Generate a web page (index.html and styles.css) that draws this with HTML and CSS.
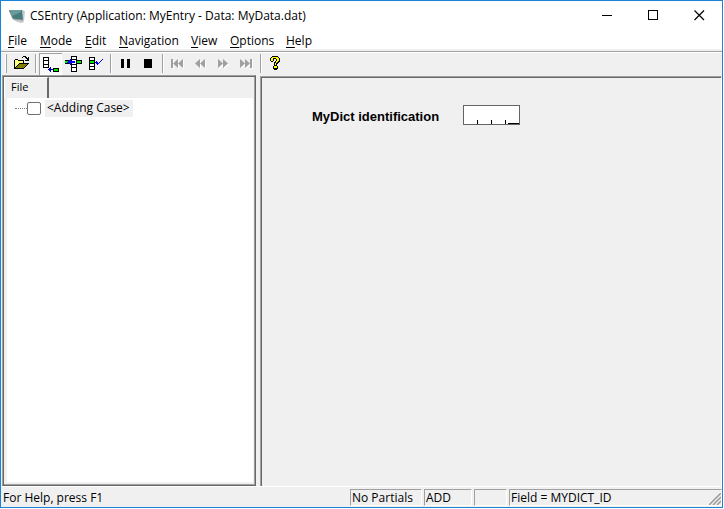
FILE: index.html
```
<!DOCTYPE html>
<html lang="en">
<head>
<meta charset="utf-8">
<title>CSEntry (Application: MyEntry - Data: MyData.dat)</title>
<link rel="stylesheet" href="styles.css">
</head>
<body>
<div class="window">
  <header class="titlebar">
    <svg class="app-icon" width="18" height="16" viewBox="0 0 18 16">
      <path d="M5 12l9 0 1 2-3 1-6-2z" fill="#c4c8c8"/>
      <path d="M13 2l3 1-1 10-2-1z" fill="#c4cbcb"/>
      <path d="M0 2l13 0 1 10-10-1z" fill="#477c7c"/>
      <path d="M1 2l11 0 0 2-9 4z" fill="#6b9c9b"/>
      <path d="M0 2l4 9 10 1" fill="none" stroke="#8a9696" stroke-width="1"/>
    </svg>
    <span class="title">CSEntry (Application: MyEntry - Data: MyData.dat)</span>
    <button class="caption" aria-label="Minimize"><svg width="11" height="11" shape-rendering="crispEdges"><path d="M0 5h10v1H0z"/></svg></button>
    <button class="caption" aria-label="Maximize"><svg width="11" height="11" shape-rendering="crispEdges"><path d="M.5 .5h9v9h-9z" fill="none" stroke="#000"/></svg></button>
    <button class="caption" aria-label="Close"><svg width="11" height="11"><path d="M.5 .5l9.500 9.500M10 .5L.5 10" stroke="#000" stroke-width="1.200"/></svg></button>
  </header>
  <nav class="menubar">
    <button><u>F</u>ile</button>
    <button><u>M</u>ode</button>
    <button><u>E</u>dit</button>
    <button><u>N</u>avigation</button>
    <button><u>V</u>iew</button>
    <button><u>O</u>ptions</button>
    <button><u>H</u>elp</button>
  </nav>
  <div class="toolbar">
    <span class="grip"></span>
    <button class="tool" aria-label="Open"><svg viewBox="0 0 23 22" shape-rendering="crispEdges">
      <path d="M4 7h1V6h3v1h6v3h5v1h-1v1h-1v1h-1v1h-1v1h-1v1H4z" fill="#000"/>
      <path d="M5 7h3v1h5v2H9v1H8v1H7v1H6v1H5z" fill="#ffff80"/>
      <path d="M9 11h8v1h-1v1h-1v1h-1v1H6v-1h1v-1h1v-1h1z" fill="#808000"/>
      <path d="M12 4h1V3h3v1h1v1h1V4h1v4h-4V7h2V6h-1V5h-1V4h-2v1h-1z" fill="#000"/>
    </svg></button>
    <span class="sep"></span>
    <button class="tool pressed" aria-label="Add case"><svg viewBox="0 0 23 22" shape-rendering="crispEdges">
      <path d="M4 4h6v11H4z"/><path d="M5 5h4v2H5zM5 8h4v3H5zM5 12h4v2H5z" fill="#fff"/>
      <path d="M9 16h1v-1h1v-1h1v2h2v1h-2v2h-1v-1h-1v-1H9z" fill="#0000c0"/>
      <path d="M14 15h6v4h-6z"/><path d="M15 16h4v2h-4z" fill="#00e800"/>
    </svg></button>
    <button class="tool" aria-label="Insert case"><svg viewBox="0 0 23 22" shape-rendering="crispEdges">
      <path d="M9 3h6v16H9z"/><path d="M10 4h4v2h-4zM10 7h4v4h-4zM10 12h4v2h-4zM10 15h4v3h-4z" fill="#fff"/>
      <path d="M3 7h5v4H3zM14 7h6v4h-6z"/><path d="M3 8h3v2H3zM15 8h4v2h-4z" fill="#00e800"/>
      <path d="M5 9h1V8h1V7h1V6h1v2h4v2H9v2H8v-1H7v-1H5z" fill="#0000ff"/>
    </svg></button>
    <button class="tool" aria-label="Modify case"><svg viewBox="0 0 23 22" shape-rendering="crispEdges">
      <path d="M4 4h6v13H4z"/><path d="M5 5h4v2H5zM5 11h4v2H5zM5 14h4v2H5z" fill="#fff"/><path d="M5 8h4v2H5z" fill="#00e800"/>
      <path d="M11 8h1v1h1v1h1V9h1V8h1V7h1V6h1v1h-1v1h-1v1h-1v1h-1v1h-1v1h-1v-1h-1v-1h-1z" fill="#0000ff"/>
    </svg></button>
    <span class="sep"></span>
    <button class="tool" aria-label="Pause"><svg viewBox="0 0 23 22" shape-rendering="crispEdges"><path d="M7 6h3v9H7zM13 6h3v9h-3z"/></svg></button>
    <button class="tool" aria-label="Stop"><svg viewBox="0 0 23 22" shape-rendering="crispEdges"><path d="M7 6h8v9H7z"/></svg></button>
    <span class="sep"></span>
    <button class="tool off" aria-label="First case" disabled><svg viewBox="0 0 23 22"><path class="lit" d="M6 7h2v9H6zM13 7v9l-5-4.500zM18 7v9l-5-4.500z"/><path d="M5 6h2v9H5zM12 6v9l-5-4.500zM17 6v9l-5-4.500z"/></svg></button>
    <button class="tool off" aria-label="Previous case" disabled><svg viewBox="0 0 23 22"><path class="lit" d="M12 7v9l-5-4.500zM17 7v9l-5-4.500z"/><path d="M11 6v9l-5-4.500zM16 6v9l-5-4.500z"/></svg></button>
    <button class="tool off" aria-label="Next case" disabled><svg viewBox="0 0 23 22"><path class="lit" d="M7 7v9l5-4.500zM12 7v9l5-4.500z"/><path d="M6 6v9l5-4.500zM11 6v9l5-4.500z"/></svg></button>
    <button class="tool off" aria-label="Last case" disabled><svg viewBox="0 0 23 22"><path class="lit" d="M6 7v9l5-4.500zM11 7v9l5-4.500zM16 7h2v9h-2z"/><path d="M5 6v9l5-4.500zM10 6v9l5-4.500zM15 6h2v9h-2z"/></svg></button>
    <span class="sep"></span>
    <button class="tool" aria-label="Help"><svg viewBox="0 0 23 22" shape-rendering="crispEdges">
      <path d="M8 3h6v1h1v1h1v4h-1v1h-1v1h-1v2h1v3h-1v1h-3v-1H9v-3h1V9h1V8h1V6h-2v2H9v1H7V8H6V5h1V4h1z"/>
      <path d="M8 4h6v1h1v3h-1v1h-1v1h-1v2h-1v-2h1V8h1V6h-1V5H9v3H7V5h1zM10 13h3v2h-3z" fill="#ff0"/>
    </svg></button>
  </div>
  <main class="work">
    <section class="cases">
      <div class="tabs"><button class="tab">File</button></div>
      <div class="tree">
        <label class="node"><span class="branch"></span><input type="checkbox"><span class="node-text">&lt;Adding Case&gt;</span></label>
      </div>
    </section>
    <section class="form">
      <label class="field-label" for="dict-id">MyDict identification</label>
      <span class="field">
        <input id="dict-id" type="text" maxlength="4">
        <svg class="ticks" width="55" height="4" shape-rendering="crispEdges"><path d="M13 0h1v4h-1zM27 0h1v4h-1zM41 0h1v4h-1zM44 3h11v1H44z"/></svg>
      </span>
    </section>
  </main>
  <footer class="status">
    <span class="hint">For Help, press F1</span>
    <span class="pane">No Partials</span>
    <span class="pane">ADD</span>
    <span class="pane"></span>
    <span class="pane">Field = MYDICT_ID
      <svg class="sizer" width="12" height="12"><path d="M0 12L12 0M4 12l8-8M8 12l4-4" stroke="#999" stroke-width="1.500"/></svg>
    </span>
  </footer>
</div>
</body>
</html>
```
FILE: styles.css
```
* { box-sizing: border-box; }
body {
  margin: 0;
  padding: 0 1px 1px 0;
  height: 100vh;
  background: #fff;
  font-family: "Open Sans", "Noto Sans", sans-serif;
  font-size: 12px;
  line-height: 16px;
  color: #000;
}
button {
  margin: 0;
  padding: 0;
  border: 0;
  background: none;
  font: inherit;
  color: inherit;
  text-align: left;
}
svg { display: block; }

.window {
  display: flex;
  flex-direction: column;
  height: 100%;
  border: 1px solid #1883d7;
  background: #f0f0f0;
}

.titlebar {
  display: flex;
  align-items: center;
  height: 29px;
  padding-left: 8px;
  background: #fff;
}
.app-icon { margin-right: 3px; }
.title { flex: 1; white-space: nowrap; }
.caption {
  display: flex;
  align-items: center;
  justify-content: center;
  width: 46px;
  height: 29px;
}

.menubar {
  display: grid;
  grid-template-columns: 32px 45px 34px 72px 39px 56px 1fr;
  height: 19px;
  padding-left: 7px;
  background: #fff;
}
.menubar button { height: 22px; white-space: nowrap; }
.menubar u { text-underline-offset: 2px; }

.toolbar {
  display: flex;
  height: 26px;
  padding: 2px 0 0 4px;
  background: linear-gradient(#f0f0f0 0 2px, #a0a0a0 2px 3px, #fff 3px 4px, #f0f0f0 4px);
}
.grip {
  width: 2px;
  height: 19px;
  margin: 3px 3px 0 0;
  border-left: 1px solid #fff;
  border-right: 1px solid #a0a0a0;
}
.sep {
  width: 6px;
  height: 19px;
  margin-top: 3px;
  background: linear-gradient(90deg, transparent 2px, #a0a0a0 2px 3px, #fff 3px 4px, transparent 4px);
}
.tool { width: 23px; height: 22px; margin-top: 2px; }
.tool svg { width: 23px; height: 22px; }
.pressed {
  background: #f8f8f8;
  box-shadow: inset 1px 1px #a0a0a0, inset -1px -1px #fff;
}
.off { fill: #a0a0a0; }
.lit { fill: #fff; }

.work {
  display: grid;
  grid-template-columns: 255px 1fr;
  column-gap: 4px;
  flex: 1;
  border-bottom: 1px solid #fff;
}
.cases {
  display: flex;
  flex-direction: column;
  margin-left: 1px;
  border: 1px solid #a0a0a0;
  border-right-color: #696969;
  border-bottom-color: #696969;
  box-shadow: inset 1px 1px #696969, inset -1px -1px #a0a0a0;
}
.tabs { height: 22px; padding: 1px 0 0 1px; }
.tab {
  width: 45px;
  height: 21px;
  padding: 0 0 2px 6px;
  border: 1px solid #fff;
  border-right: 2px solid #696969;
  border-bottom: 0;
  font-size: 11px;
}
.tree {
  flex: 1;
  margin: 0 2px 3px 4px;
  padding-top: 2px;
  background: #fff;
}
.node { display: flex; align-items: center; height: 17px; padding-left: 8px; }
.branch { width: 12px; border-top: 1px dotted #808080; }
.node input {
  appearance: none;
  width: 14px;
  height: 13px;
  margin: 0 4px 0 0;
  border: 1px solid #707070;
  border-radius: 2px;
  background: #fff;
}
.node-text { padding: 0 3px 1px 2px; background: #f0f0f0; white-space: nowrap; }

.form {
  display: flex;
  align-items: flex-start;
  gap: 24px;
  margin-top: 1px;
  padding: 28px 0 0 51px;
  border: 1px solid #a0a0a0;
  border-right-color: #fff;
  border-bottom: 0;
  box-shadow: inset 1px 1px #696969;
}
.field-label {
  padding-top: 4px;
  font: bold 13px/16px "Liberation Sans", Arial, sans-serif;
  white-space: nowrap;
}
.field { position: relative; }
.field input {
  display: block;
  width: 57px;
  height: 20px;
  padding: 0 2px;
  border: 1px solid #646464;
  background: #fff;
  font: 13px/16px "Liberation Mono", monospace;
}
.ticks { position: absolute; left: 1px; bottom: 1px; }

.status {
  display: grid;
  grid-template-columns: 345px 72px 48px 33px 1fr;
  column-gap: 2px;
  height: 20px;
  padding: 2px 0 1px 2px;
}
.hint, .pane { white-space: nowrap; }
.hint { padding-top: 1px; }
.pane {
  position: relative;
  height: 17px;
  padding-left: 1px;
  border: 1px solid #a0a0a0;
  border-right-color: #fff;
  border-bottom-color: #fff;
}
.sizer { position: absolute; right: 0; bottom: 0; }
```
